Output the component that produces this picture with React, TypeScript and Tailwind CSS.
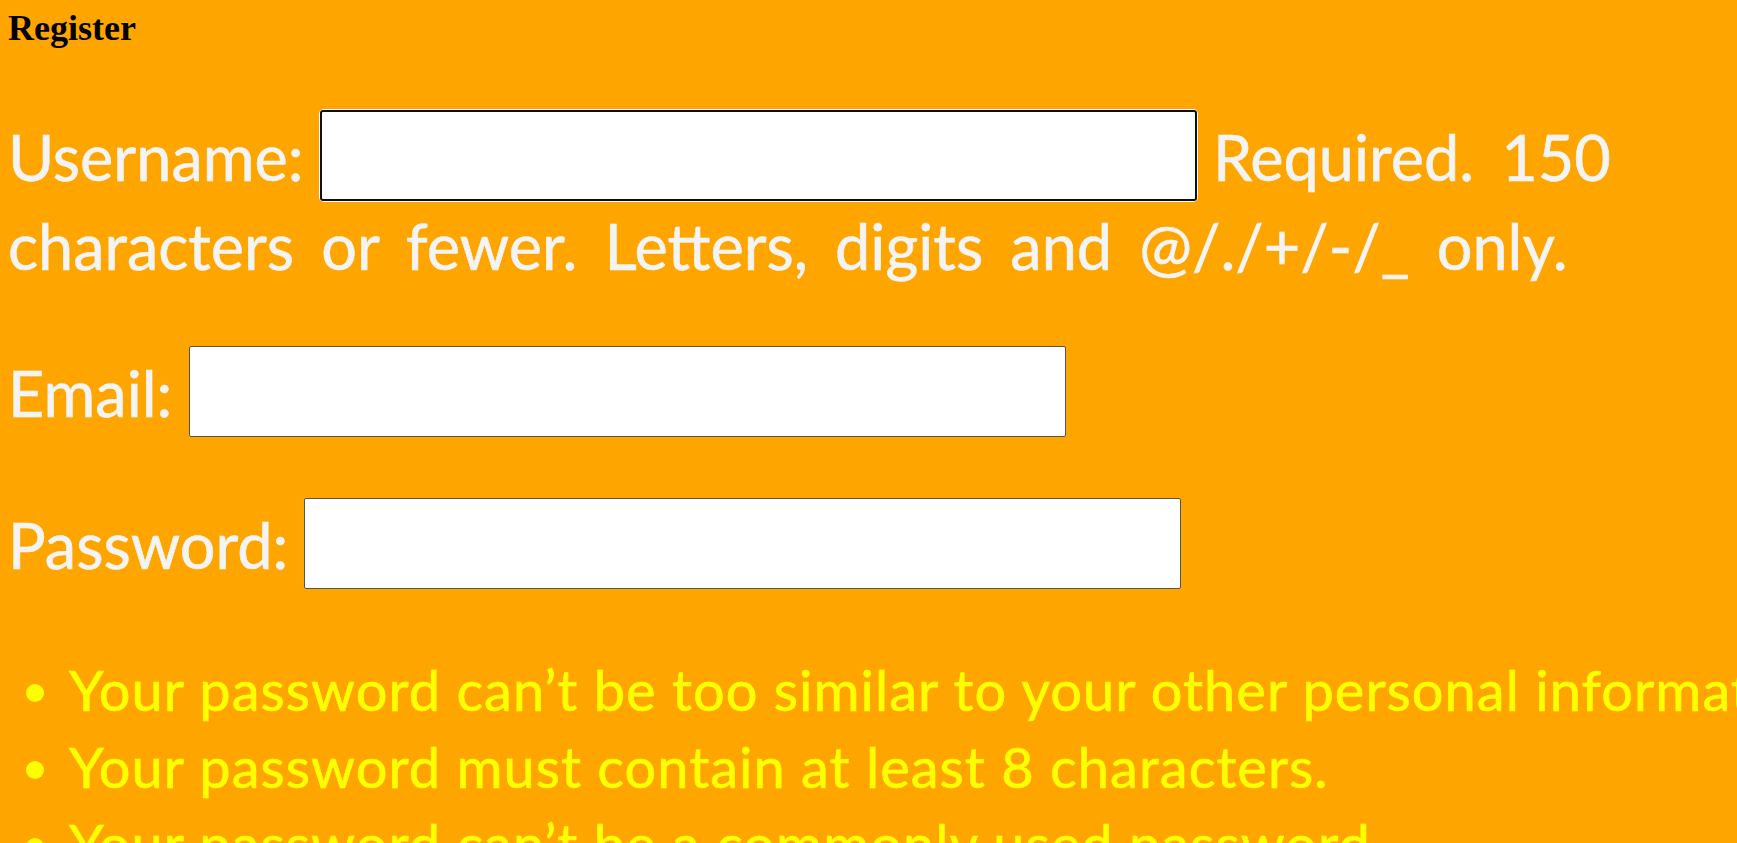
import React from "react";

function Field({ focused }: { focused?: boolean }) {
  if (focused) {
    return (
      <span className="inline-block overflow-hidden align-[-21px] rounded-[5px] bg-white p-[1px] -mx-[1px]">
        <input
          type="text"
          className="block h-[91px] w-[877px] rounded-[3px] border-2 border-[#101010] bg-white outline-none"
        />
      </span>
    );
  }
  return (
    <span className="inline-block overflow-hidden align-[-20px]">
      <input
        type="text"
        className="block h-[91px] w-[877px] rounded-[2px] border border-[#555555] bg-white outline-none"
      />
    </span>
  );
}

export default function App() {
  return (
    <div className="h-[843px] w-full overflow-hidden bg-[#ffa500] px-2 pt-2">
      <div className="font-['Liberation_Serif',serif] text-[36px] font-bold leading-[41px] text-black">
        Register
      </div>
      <form className="font-[Lato,sans-serif] text-[63px] leading-[87px] text-[#f4f4f4] [-webkit-text-stroke:0.6px_currentColor]">
        <p className="mt-[60px]">
          Username: <Field focused />{" "}
          <span className="[word-spacing:11px]">
            Required. 150 characters or fewer. Letters, digits and @/./+/-/_ only.
          </span>
        </p>
        <p className="mt-[57px]">
          Email: <Field />
        </p>
        <p className="mt-[61px]">
          Password: <Field />
        </p>
        <ul className="mt-[62px] list-disc whitespace-nowrap pl-[61px] text-[56px] leading-[77px] tracking-[1px] text-[#ffff00]">
          <li>Your password can’t be too similar to your other personal information.</li>
          <li>Your password must contain at least 8 characters.</li>
          <li>Your password can’t be a commonly used password.</li>
          <li>Your password can’t be entirely numeric.</li>
        </ul>
        <p className="mt-[40px]">
          Password confirmation: <Field />
        </p>
      </form>
    </div>
  );
}
